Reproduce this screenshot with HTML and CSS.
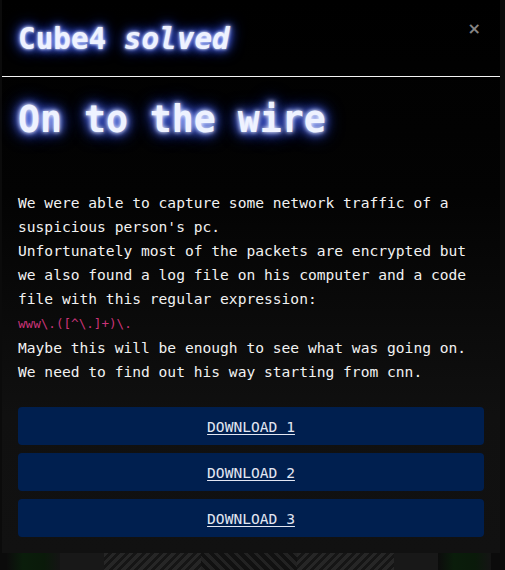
FILE: index.html
```html
<!DOCTYPE html>
<html lang="en">
<head>
<meta charset="utf-8">
<title>Cube4 solved</title>
<link rel="stylesheet" href="styles.css">
</head>
<body>
<div class="page">
  <div class="modal">
    <div class="modal-header">
      <h1 class="modal-title">Cube4 <em>solved</em></h1>
      <span class="close">&times;</span>
    </div>
    <div class="modal-body">
      <h2 class="glow-title">On to the wire</h2>
      <p class="story">We were able to capture some network traffic of a suspicious person's pc.<br>Unfortunately most of the packets are encrypted but we also found a log file on his computer and a code file with this regular expression:<br><code>www\.([^\.]+)\.</code><br>Maybe this will be enough to see what was going on.<br>We need to find out his way starting from cnn.</p>
      <div class="downloads">
        <a class="btn" href="#">DOWNLOAD 1</a>
        <a class="btn" href="#">DOWNLOAD 2</a>
        <a class="btn" href="#">DOWNLOAD 3</a>
      </div>
    </div>
  </div>
  <div class="backdrop-strip">
    <span class="tile green"></span>
    <span class="tile grey"></span>
    <span class="tile tex"></span>
    <span class="tile tex dark"></span>
    <span class="tile tex"></span>
    <span class="tile grey"></span>
    <span class="tile green"></span>
  </div>
</div>
</body>
</html>
```

FILE: styles.css
```css
html, body {
  margin: 0;
  padding: 0;
  background: #0b0b0b;
  height: 570px;
  overflow: hidden;
}
.page {
  padding-left: 2px;
  font-family: "DejaVu Sans Mono", "Liberation Mono", monospace;
}
.modal {
  width: 498px;
  height: 553px;
  background: linear-gradient(to bottom, #000 0%, #030303 35%, #101010 75%, #111 100%);
  display: flex;
  flex-direction: column;
  box-sizing: border-box;
}
.modal-header {
  height: 77px;
  border-bottom: 1px solid #f4f4f4;
  display: flex;
  align-items: center;
  justify-content: space-between;
  padding: 0 16px;
}
.modal-title {
  margin: 0;
  margin-top: 2px;
  font-size: 29.3px;
  font-weight: bold;
  color: #eef2ff;
  line-height: 38px;
  text-shadow: 0 0 3px #fff, 0 0 6px #7a95ff, 0 0 11px #3b5bff, 0 0 16px #2a48ff;
}
.modal-title em {
  font-style: italic;
}
.close {
  align-self: flex-start;
  margin-top: 21px;
  margin-right: 3px;
  color: #858585;
  font-family: "DejaVu Sans", sans-serif;
  font-weight: bold;
  font-size: 16px;
  line-height: 16px;
}
.modal-body {
  padding: 19px 16px 16px 16px;
  display: flex;
  flex-direction: column;
}
.glow-title {
  margin: 0;
  font-size: 36.5px;
  font-weight: bold;
  line-height: 48px;
  color: #eef2ff;
  text-shadow: 0 0 4px #fff, 0 0 8px #7a95ff, 0 0 13px #3b5bff, 0 0 19px #2a48ff;
}
.story {
  margin: 47px 0 23px 0;
  color: #f2f2f2;
  font-size: 14.6px;
  line-height: 24px;
}
.story code {
  font-family: "DejaVu Sans Mono", "Liberation Mono", monospace;
  font-size: 12.6px;
  color: #c93478;
}
.downloads {
  display: flex;
  flex-direction: column;
  gap: 8px;
}
.btn {
  display: flex;
  align-items: center;
  justify-content: center;
  height: 38px;
  background: #001f4f;
  border-radius: 4px;
  color: #e2e6f2;
  font-size: 14.6px;
  text-decoration: underline;
  text-underline-offset: 2px;
}
.backdrop-strip {
  display: flex;
  height: 17px;
  margin-left: 5px;
  width: 484px;
}
.tile {
  height: 17px;
}
.tile.green { width: 55px; background: linear-gradient(90deg, #0c0c0c, #0a1d0b 30%, #0a1a0a 70%, #141414 100%); }
.tile.grey { width: 45px; background: #181818; }
.tile.tex {
  width: 100px;
  background: repeating-linear-gradient(135deg, #262626 0 3px, #151515 3px 6px);
}
.tile.tex.dark {
  background: repeating-linear-gradient(45deg, #222 0 3px, #111 3px 7px);
}
```
